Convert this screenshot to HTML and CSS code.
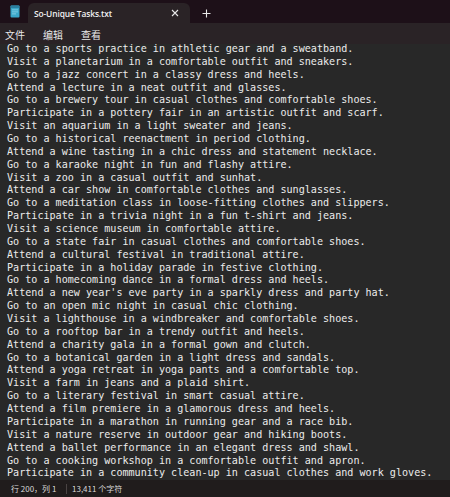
FILE: index.html
```html
<!DOCTYPE html>
<html lang="zh">
<head>
<meta charset="utf-8">
<title>So-Unique Tasks.txt - Notepad</title>
<link rel="stylesheet" href="styles.css">
</head>
<body>
<div class="window">
  <div class="titlebar">
    <div class="appicon">
      <svg width="10" height="13" viewBox="0 0 10 13"><rect x="0.5" y="0.5" width="9" height="12" rx="1" fill="#3aa7c9"/><rect x="0.5" y="0.5" width="9" height="2.5" rx="1" fill="#2b7fa0"/><rect x="2" y="4.5" width="6" height="0.8" fill="#8fd6ea"/><rect x="2" y="6.5" width="6" height="0.8" fill="#8fd6ea"/><rect x="2" y="8.5" width="4" height="0.8" fill="#8fd6ea"/></svg>
    </div>
    <div class="tab">
      <span class="tabtitle">So-Unique Tasks.txt</span>
      <svg class="close" width="8" height="8" viewBox="0 0 8 8"><path d="M1 1L7 7M7 1L1 7" stroke="#e8e8e8" stroke-width="1.1"/></svg>
    </div>
    <div class="newtab">
      <svg width="9" height="9" viewBox="0 0 9 9"><path d="M4.5 0.5V8.5M0.5 4.5H8.5" stroke="#e8e8e8" stroke-width="1.1"/></svg>
    </div>
  </div>
  <div class="menubar">
    <span class="menu">文件</span>
    <span class="menu">编辑</span>
    <span class="menu">查看</span>
  </div>
  <div class="editor">
<pre class="text">Go to a sports practice in athletic gear and a sweatband.
Visit a planetarium in a comfortable outfit and sneakers.
Go to a jazz concert in a classy dress and heels.
Attend a lecture in a neat outfit and glasses.
Go to a brewery tour in casual clothes and comfortable shoes.
Participate in a pottery fair in an artistic outfit and scarf.
Visit an aquarium in a light sweater and jeans.
Go to a historical reenactment in period clothing.
Attend a wine tasting in a chic dress and statement necklace.
Go to a karaoke night in fun and flashy attire.
Visit a zoo in a casual outfit and sunhat.
Attend a car show in comfortable clothes and sunglasses.
Go to a meditation class in loose-fitting clothes and slippers.
Participate in a trivia night in a fun t-shirt and jeans.
Visit a science museum in comfortable attire.
Go to a state fair in casual clothes and comfortable shoes.
Attend a cultural festival in traditional attire.
Participate in a holiday parade in festive clothing.
Go to a homecoming dance in a formal dress and heels.
Attend a new year's eve party in a sparkly dress and party hat.
Go to an open mic night in casual chic clothing.
Visit a lighthouse in a windbreaker and comfortable shoes.
Go to a rooftop bar in a trendy outfit and heels.
Attend a charity gala in a formal gown and clutch.
Go to a botanical garden in a light dress and sandals.
Attend a yoga retreat in yoga pants and a comfortable top.
Visit a farm in jeans and a plaid shirt.
Go to a literary festival in smart casual attire.
Attend a film premiere in a glamorous dress and heels.
Participate in a marathon in running gear and a race bib.
Visit a nature reserve in outdoor gear and hiking boots.
Attend a ballet performance in an elegant dress and shawl.
Go to a cooking workshop in a comfortable outfit and apron.
Participate in a community clean-up in casual clothes and work gloves.</pre>
  </div>
  <div class="statusbar">
    <span class="pos">行 200，列 1</span>
    <span class="sep"></span>
    <span class="count">13,411 个字符</span>
  </div>
</div>
</body>
</html>
```
FILE: styles.css
```css
html, body {
  margin: 0;
  padding: 0;
  background: #272727;
}
.window {
  width: 450px;
  height: 497px;
  display: flex;
  flex-direction: column;
  overflow: hidden;
  font-family: "Noto Sans CJK SC", "Noto Sans", sans-serif;
  color: #e6e6e6;
}
.titlebar {
  height: 23px;
  flex: none;
  background: #1d1018;
  display: flex;
  align-items: flex-end;
}
.appicon {
  width: 28px;
  height: 23px;
  display: flex;
  align-items: center;
  justify-content: center;
  padding-left: 2px;
  box-sizing: border-box;
}
.appicon svg { display: block; }
.tab {
  width: 162px;
  height: 20px;
  background: #2a2326;
  border-radius: 6px 6px 0 0;
  display: flex;
  align-items: center;
  padding: 0 11px 0 6px;
  box-sizing: border-box;
}
.tabtitle {
  flex: 1;
  font-family: "Open Sans", "Noto Sans", sans-serif;
  font-size: 8.4px;
  font-weight: 600;
  color: #f0f0f0;
  letter-spacing: -0.1px;
}
.close { display: block; }
.newtab {
  width: 32px;
  height: 20px;
  display: flex;
  align-items: center;
  justify-content: center;
}
.newtab svg { display: block; }
.menubar {
  height: 21px;
  flex: none;
  background: #2a2326;
  display: flex;
  align-items: center;
  gap: 18px;
  padding-left: 5px;
  padding-top: 1px;
  box-sizing: border-box;
}
.menu {
  font-size: 10px;
  color: #e8e8e8;
  width: 20px;
}
.editor {
  flex: 1;
  background: #282828;
  overflow: hidden;
  padding: 0 0 0 7px;
  min-height: 0;
}
.text {
  margin: -1px 0 0 0;
  font-family: "DejaVu Sans Mono", "Liberation Mono", monospace;
  font-size: 10.1px;
  line-height: 12.86px;
  color: #ececec;
  white-space: pre;
}
.statusbar {
  height: 17px;
  flex: none;
  background: #201c1c;
  display: flex;
  align-items: center;
  padding-left: 11px;
  font-size: 8px;
  color: #d8d8d8;
}
.pos { width: 50px; }
.sep {
  width: 1px;
  height: 10px;
  background: #4a4444;
  margin: 0 5px 0 5px;
}
```
